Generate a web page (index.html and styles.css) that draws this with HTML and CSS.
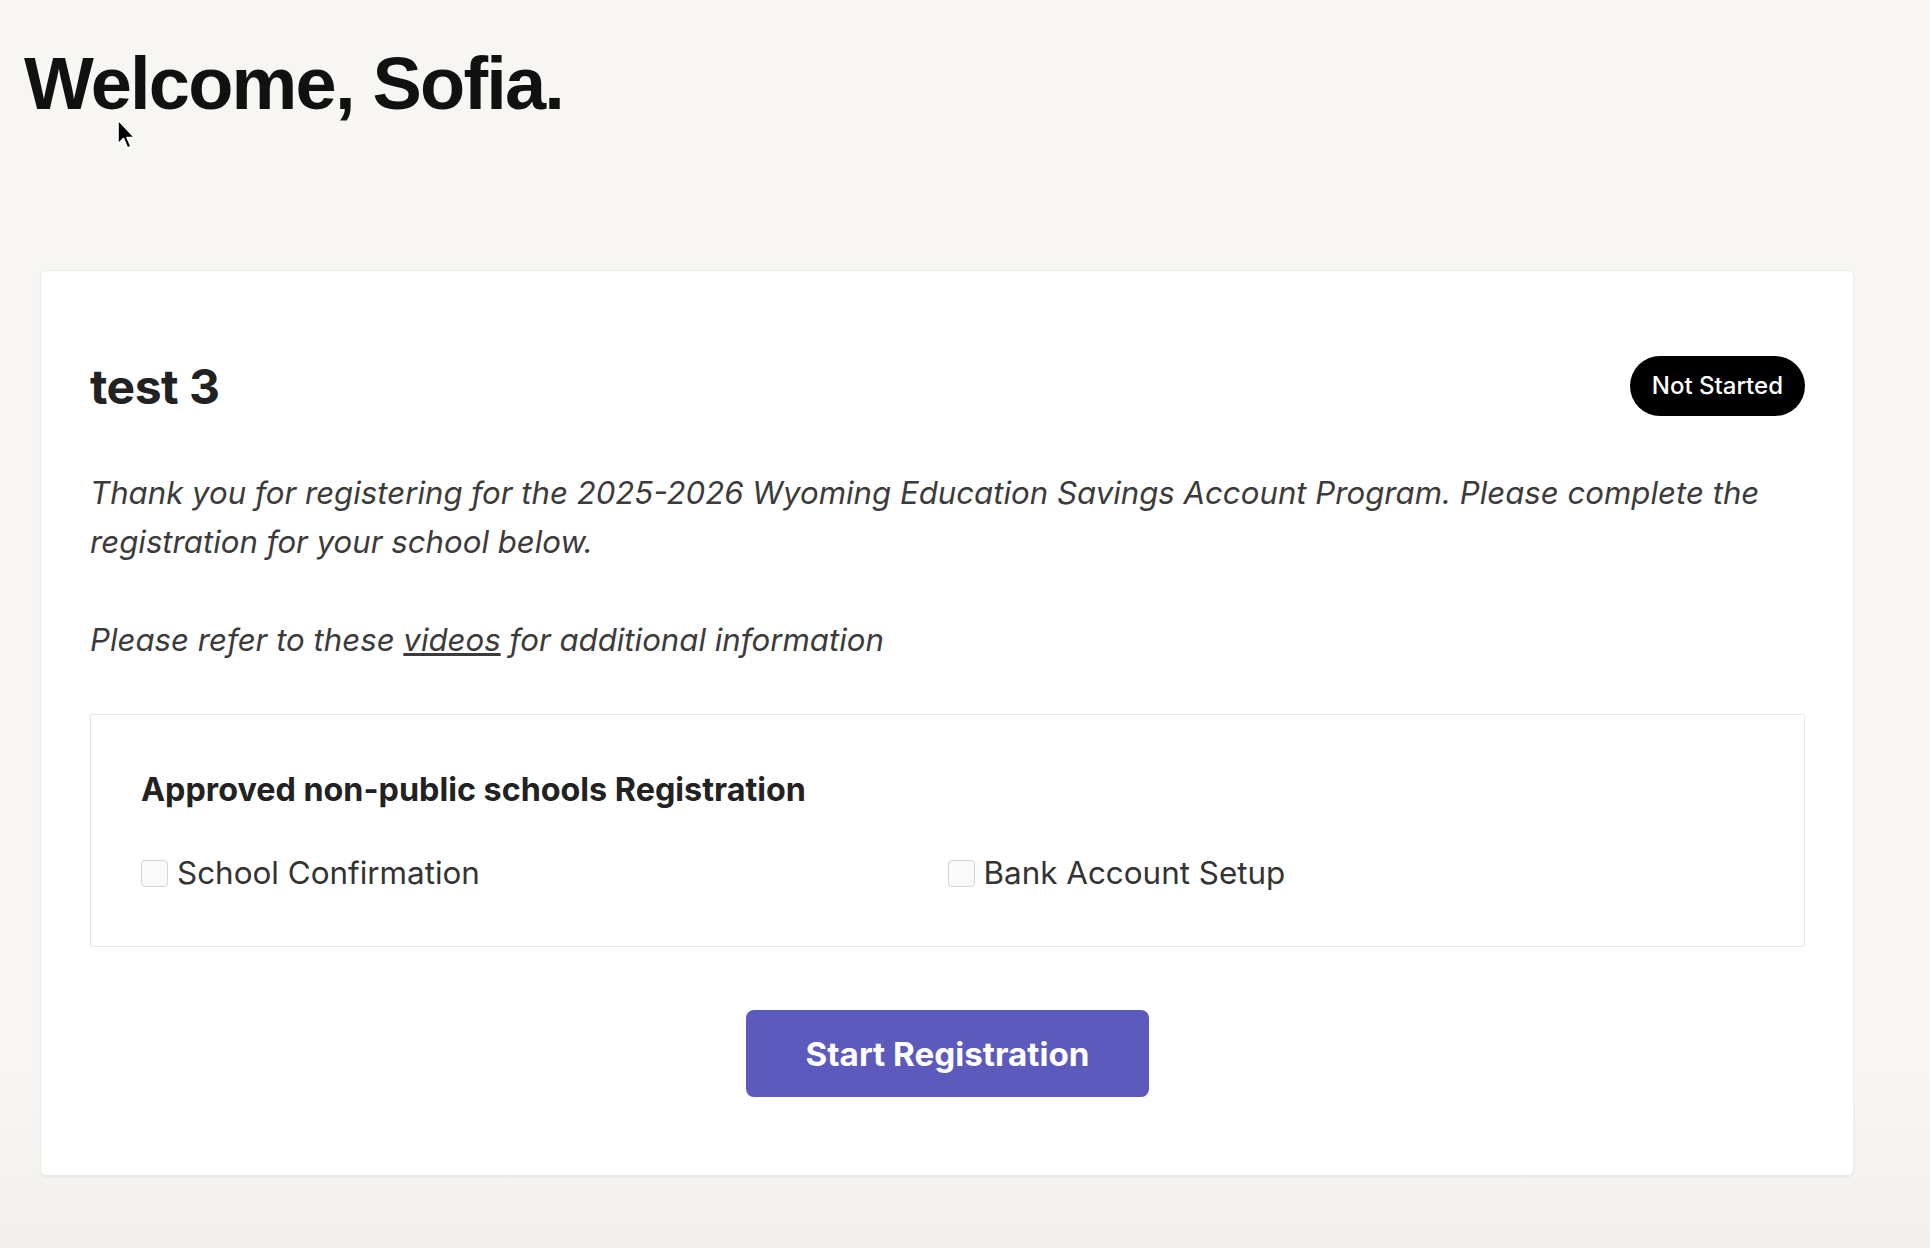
FILE: index.html
```html
<!DOCTYPE html>
<html lang="en">
<head>
  <meta charset="UTF-8">
  <meta name="viewport" content="width=device-width, initial-scale=1.0">
  <title>Dashboard</title>
  <link rel="stylesheet" href="styles.css">
</head>
<body>
  <h1 class="welcome">Welcome, Sofia.</h1>

  <!-- mouse pointer from the capture -->
  <svg class="pointer" width="22" height="34" viewBox="0 0 22 34">
    <path d="M2 2 L2 26 L7.5 20.5 L11.5 30 L15 28.5 L11 19.5 L18.5 19.5 Z" fill="#000" stroke="#fff" stroke-width="1.6" stroke-linejoin="round"/>
  </svg>

  <div class="card">
    <div class="card-header">
      <h2 class="card-title">test 3</h2>
      <span class="badge">Not Started</span>
    </div>

    <div class="intro">
      <p>Thank you for registering for the 2025-2026 Wyoming Education Savings Account Program. Please complete the registration for your school below.</p>
      <p>Please refer to these <a href="#">videos</a> for additional information</p>
    </div>

    <!-- Steps -->
    <div class="steps">
      <h3>Approved non-public schools Registration</h3>
      <div class="step-list">
        <label class="step"><span class="box"></span>School Confirmation</label>
        <label class="step"><span class="box"></span>Bank Account Setup</label>
      </div>
    </div>

    <div class="actions">
      <button type="button" class="start">Start Registration</button>
    </div>
  </div>
</body>
</html>
```

FILE: styles.css
```css
body {
  margin: 0;
  min-height: 1248px;
  font-family: Inter, "Noto Sans", sans-serif;
  background: linear-gradient(to bottom, #f7f6f3 0%, #f7f6f3 86%, #f1f0ec 100%);
  position: relative;
}

.welcome {
  margin: 0;
  padding: 47px 0 0 24px;
  font-family: "Liberation Sans", Arial, sans-serif;
  font-size: 74px;
  line-height: 1;
  font-weight: bold;
  letter-spacing: -1.8px;
  color: #111;
}

.pointer {
  position: absolute;
  left: 116px;
  top: 118px;
}

.card {
  margin: 149px 76px 0 40px;
  padding: 85px 48px 78px 49px;
  background: #fff;
  border: 1px solid #ebebeb;
  border-radius: 6px;
  box-shadow: 0 1px 2px rgba(30, 30, 60, 0.06);
}

.card-header {
  display: flex;
  align-items: center;
  justify-content: space-between;
}

.card-title {
  margin: 0;
  font-size: 48px;
  font-weight: bold;
  color: #222;
  letter-spacing: -0.5px;
}

.badge {
  display: inline-block;
  height: 60px;
  line-height: 60px;
  padding: 0 22px;
  background: #000;
  color: #fff;
  border-radius: 30px;
  font-size: 24px;
  font-weight: 500;
}

.intro {
  margin-top: 53px;
  font-size: 31.2px;
  line-height: 49px;
  font-style: italic;
  color: #3b3b3b;
}

.intro p {
  margin: 0 0 49px;
}

.intro a {
  color: #3b3b3b;
  text-decoration: underline;
}

.steps {
  border: 1px solid #e6e6e6;
  border-radius: 2px;
  padding: 55px 50px 53px 50px;
}

.steps h3 {
  margin: 0;
  font-size: 32.3px;
  line-height: 40px;
  font-weight: bold;
  color: #222;
}

.step-list {
  margin-top: 43px;
  display: grid;
  grid-template-columns: 1fr 1fr;
}

.step {
  display: flex;
  align-items: center;
  gap: 9px;
  font-size: 31.4px;
  line-height: 40px;
  color: #333;
}

.box {
  width: 25px;
  height: 25px;
  border: 1px solid #d4d4d4;
  border-radius: 4px;
  background: #fafafa;
}

.actions {
  margin-top: 63px;
  text-align: center;
}

.start {
  height: 87px;
  padding: 0 60px;
  background-color: #5d5abd;
  color: #fff;
  border: none;
  border-radius: 8px;
  font-family: Inter, sans-serif;
  font-size: 33.2px;
  font-weight: bold;
  cursor: pointer;
}
```
